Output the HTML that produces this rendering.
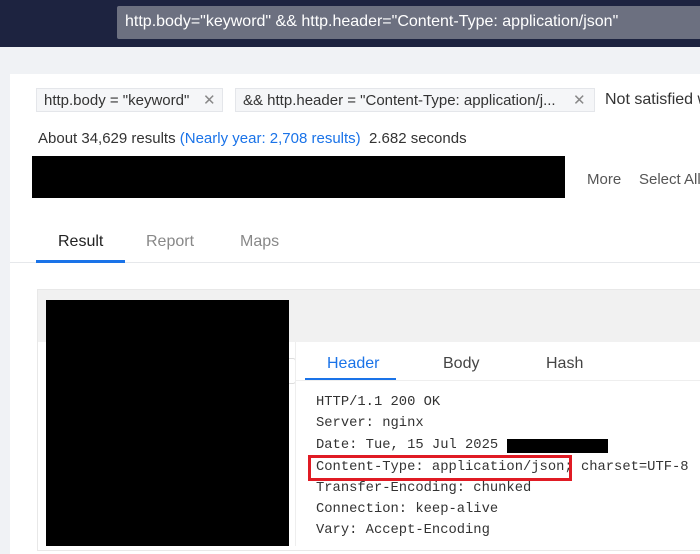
<!DOCTYPE html><html><head><style>
body{margin:0;width:700px;height:546px;overflow:hidden;background:#f0f2f5;font-family:"Liberation Sans",sans-serif;position:relative}
div,span{position:absolute}
.t{white-space:nowrap}
.chip{top:88px;height:24px;background:#f5f6f8;border:1px solid #e4e6ea;font-size:15px;color:#333;line-height:24px;box-sizing:border-box;padding-left:7px}
.m{font-family:"Liberation Mono","DejaVu Sans Mono",monospace;font-size:13.8px;color:#333;left:316px}
</style></head><body>
<div style="left:0;top:0;width:700px;height:47px;background:#1d2340"></div>
<div style="left:117px;top:6px;width:600px;height:33px;background:#6c7080;border-radius:2px"></div>
<div class="t" style="left:125px;top:13px;font-size:16px;color:#fff">http.body="keyword" &amp;&amp; http.header="Content-Type: application/json"</div>
<div style="left:10px;top:74px;width:700px;height:480px;background:#fff"></div>
<div class="chip t" style="left:36px;width:187px">http.body = "keyword" <span style="left:166px;color:#888">✕</span></div>
<div class="chip t" style="left:235px;width:360px">&amp;&amp; http.header = "Content-Type: application/j... <span style="left:337px;color:#888">✕</span></div>
<div class="t" style="left:605px;top:91px;font-size:16px;color:#333">Not satisfied w</div>
<div class="t" style="left:38px;top:130px;font-size:15px;color:#333">About 34,629 results <span style="position:static;color:#1a73e8">(Nearly year: 2,708 results)</span>&nbsp; 2.682 seconds</div>
<div style="left:32px;top:156px;width:533px;height:42px;background:#000"></div>
<div class="t" style="left:587px;top:171px;font-size:15px;color:#555">More</div>
<div class="t" style="left:639px;top:171px;font-size:15px;color:#555">Select All</div>
<div class="t" style="left:58px;top:233px;font-size:16px;color:#222">Result</div>
<div class="t" style="left:146px;top:233px;font-size:16px;color:#888">Report</div>
<div class="t" style="left:240px;top:233px;font-size:16px;color:#888">Maps</div>
<div style="left:10px;top:262px;width:690px;height:1px;background:#e6e8eb"></div>
<div style="left:36px;top:260px;width:89px;height:3px;background:#1a73e8"></div>
<div style="left:37px;top:289px;width:670px;height:260px;background:#fff;border:1px solid #e8e8e8"></div>
<div style="left:38px;top:290px;width:670px;height:52px;background:#f1f1f1"></div>
<div style="left:270px;top:358px;width:24px;height:24px;border:1px solid #ddd;border-radius:3px"></div>
<div style="left:46px;top:300px;width:243px;height:246px;background:#000"></div>
<div style="left:295px;top:342px;width:1px;height:204px;background:#eee"></div>
<div class="t" style="left:327px;top:355px;font-size:16px;color:#1a73e8">Header</div>
<div class="t" style="left:443px;top:355px;font-size:16px;color:#444">Body</div>
<div class="t" style="left:546px;top:355px;font-size:16px;color:#444">Hash</div>
<div style="left:296px;top:380px;width:410px;height:1px;background:#eee"></div>
<div style="left:305px;top:378px;width:91px;height:2px;background:#1a73e8"></div>
<div class="m t" style="top:395px">HTTP/1.1 200 OK</div>
<div class="m t" style="top:416px">Server: nginx</div>
<div class="m t" style="top:438px">Date: Tue, 15 Jul 2025</div>
<div style="left:507px;top:439px;width:101px;height:14px;background:#000"></div>
<div class="m t" style="top:460px">Content-Type: application/json; charset=UTF-8</div>
<div style="left:308px;top:455px;width:258px;height:20px;border:3px solid #e01b24"></div>
<div class="m t" style="top:481px">Transfer-Encoding: chunked</div>
<div class="m t" style="top:502px">Connection: keep-alive</div>
<div class="m t" style="top:523px">Vary: Accept-Encoding</div>
</body></html>
